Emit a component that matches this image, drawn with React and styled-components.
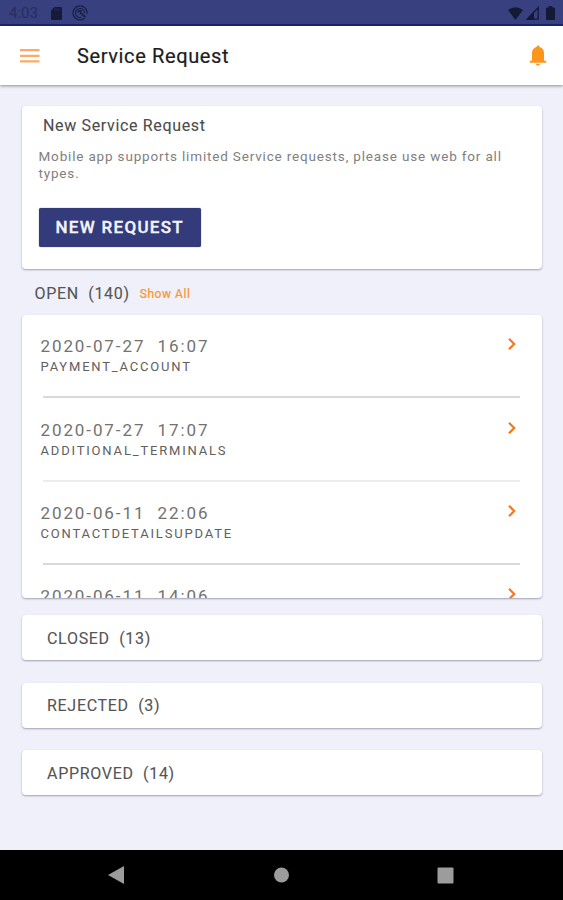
import React from 'react';
import styled, { createGlobalStyle } from 'styled-components';

const GlobalStyle = createGlobalStyle`
  * { box-sizing: border-box; }
  body { margin: 0; background: #eff0f9; font-family: Roboto, "Liberation Sans", sans-serif; }
`;

const Screen = styled.div`
  width: 563px;
  height: 900px;
  display: flex;
  flex-direction: column;
  overflow: hidden;
  background: #eff0f9;
`;

const StatusBar = styled.header`
  height: 26px;
  flex: none;
  display: flex;
  justify-content: space-between;
  padding: 2px 8px 0 9px;
  background: #38407f;
  border-bottom: 2px solid #18256f;
`;

const StatusGroup = styled.div`
  display: flex;
  align-items: center;
  gap: ${(p) => p.$gap}px;
`;

const Clock = styled.span`
  width: 32px;
  font-size: 15px;
  line-height: 22px;
  color: #272d5e;
`;

const AppBar = styled.div`
  height: 59px;
  flex: none;
  display: flex;
  align-items: center;
  padding: 0 16px 0 20px;
  background: #fff;
  box-shadow: 0 1px 3px rgba(40, 42, 60, 0.5);
`;

const MenuButton = styled.button`
  width: 57px;
  height: 14px;
  padding: 0;
  border: 0;
  background: none;
  display: flex;
`;

const Title = styled.h1`
  flex: 1;
  margin: 0;
  font-size: 20px;
  font-weight: 400;
  line-height: 24px;
  letter-spacing: 0.62px;
  color: #1c1c1c;
  -webkit-text-stroke: 0.2px #1c1c1c;
`;

const Content = styled.main`
  flex: 1;
  min-height: 0;
  padding: 21px 21px 0 21.5px;
  display: flex;
  flex-direction: column;
`;

const Card = styled.section`
  flex: none;
  height: ${(p) => p.$height}px;
  margin-bottom: ${(p) => p.$after || 0}px;
  padding: ${(p) => p.$pad || '0'};
  overflow: hidden;
  border-radius: 4px;
  background: #fff;
  box-shadow: 0 1px 2px rgba(50, 50, 75, 0.42);
`;

const CardTitle = styled.h2`
  margin: 0 0 0 4.5px;
  font-size: 16px;
  font-weight: 400;
  line-height: 20px;
  letter-spacing: 0.66px;
  color: #4c4c4c;
  -webkit-text-stroke: 0.1px #4c4c4c;
`;

const Description = styled.p`
  margin: 12px 0 26px;
  width: 475px;
  font-size: 13.5px;
  line-height: 17px;
  letter-spacing: 0.83px;
  color: #808080;
`;

const PrimaryButton = styled.button`
  width: 162.5px;
  height: 39px;
  padding: 0;
  border: 0;
  border-radius: 2px;
  background: #333b7b;
  box-shadow: 0 0 1px #333b7b;
  color: #f3f4fc;
  font: 500 17px/39px Roboto, sans-serif;
  letter-spacing: 1.3px;
  -webkit-text-stroke: 0.35px #f3f4fc;
`;

const SectionHeader = styled.div`
  height: 46px;
  flex: none;
  display: flex;
  align-items: center;
  padding: 3px 0 0 13px;
  gap: 10px;
`;

const SectionLabel = styled.span`
  font-size: 16px;
  line-height: 20px;
  letter-spacing: 0.7px;
  white-space: pre;
  color: #555;
  -webkit-text-stroke: 0.1px #555;
`;

const ShowAll = styled.a`
  font-size: 12px;
  line-height: 16px;
  letter-spacing: 0.55px;
  color: #f9952b;
  -webkit-text-stroke: 0.2px #f9952b;
`;

const RequestRow = styled.div`
  height: 83.4px;
  display: flex;
  justify-content: space-between;
  padding: 21.2px 24px 0 19px;
`;

const RowText = styled.div`
  display: flex;
  flex-direction: column;
`;

const RowDate = styled.span`
  font-size: 17px;
  line-height: 20px;
  letter-spacing: 1.9px;
  white-space: pre;
  color: #727272;
`;

const RowType = styled.span`
  margin-top: 3.3px;
  font-size: 13px;
  line-height: 16px;
  letter-spacing: 1.82px;
  color: #606060;
`;

const Divider = styled.hr`
  height: 2px;
  margin: -2px 22px 0 21px;
  border: 0;
  background: ${(p) => (p.$light ? '#ececec' : '#d9d9d9')};
`;

const NavBar = styled.nav`
  height: 50px;
  flex: none;
  display: grid;
  grid-template-columns: repeat(3, 164.5px);
  justify-content: center;
  align-items: center;
  justify-items: center;
  padding-right: 2px;
  background: #000;
`;

const REQUESTS = [
  { date: '2020-07-27  16:07', type: 'PAYMENT_ACCOUNT' },
  { date: '2020-07-27  17:07', type: 'ADDITIONAL_TERMINALS', light: true },
  { date: '2020-06-11  22:06', type: 'CONTACTDETAILSUPDATE' },
  { date: '2020-06-11  14:06' },
];

const SdCardIcon = () => (
  <svg width="11" height="13" viewBox="0 0 11 13">
    <path d="M3.5 0H10a1 1 0 0 1 1 1v11a1 1 0 0 1-1 1H1a1 1 0 0 1-1-1V3.5z" fill="#151b38" />
    <path d="M4 1.500v2M6 1.500v2M8 1.500v2" stroke="#2b3263" strokeWidth="1" />
  </svg>
);

const SyncIcon = () => (
  <svg width="16" height="16" viewBox="0 0 16 16" fill="none" stroke="#1b2147">
    <path d="M12.600 13.200A7 7 0 1 1 15 8.600" strokeWidth="1.300" />
    <path d="M9.500 12.200A4.500 4.500 0 1 1 12.500 8" strokeWidth="1.100" />
    <path d="M5.800 7.200a2.600 2.600 0 0 1 3.800-1M8 7.600l5.400 4.400" strokeWidth="1.900" />
  </svg>
);

const WifiIcon = () => (
  <svg width="15" height="13" viewBox="0 0 15 13">
    <path d="M0 3Q7.500-2.600 15 3L7.500 13z" fill="#131a35" />
  </svg>
);

const SignalIcon = () => (
  <svg width="13" height="14" viewBox="0 0 13 14">
    <path d="M1.200 13.200L12.200 1.500v11.700z" fill="none" stroke="#131a35" strokeWidth="1.300" />
    <path d="M0 14L8 5.500V14z" fill="#131a35" />
  </svg>
);

const BatteryIcon = () => (
  <svg width="9" height="14" viewBox="0 0 9 14">
    <path d="M2.700 0h3.600v1.400H8a1 1 0 0 1 1 1V13a1 1 0 0 1-1 1H1a1 1 0 0 1-1-1V2.400a1 1 0 0 1 1-1h1.700z" fill="#131a35" />
  </svg>
);

const MenuIcon = () => (
  <svg width="20" height="14" viewBox="0 0 20 14">
    <path d="M0 1.200h19.500M0 6.800h19.500M0 12.400h19.500" stroke="#fbab67" strokeWidth="2.300" />
  </svg>
);

const BellIcon = () => (
  <svg width="18" height="21" viewBox="0 0 18 21" fill="#fb951b">
    <path d="M9 0l1.700 2C13.600 3 15 5 15 8v7.800h2.200v1.900H.8v-1.900H3V8c0-3 1.400-5 4.300-6z" />
    <path d="M7 18.700h4a2 1.900 0 0 1-4 0z" />
  </svg>
);

const ChevronIcon = () => (
  <svg width="12" height="16" viewBox="0 0 12 16">
    <path d="M3 2.700l5.200 5.300L3 13.300" fill="none" stroke="#f5781e" strokeWidth="2.200" />
  </svg>
);

export default function App() {
  return (
    <Screen>
      <GlobalStyle />
      <StatusBar>
        <StatusGroup $gap={10}>
          <Clock>4:03</Clock>
          <SdCardIcon />
          <SyncIcon />
        </StatusGroup>
        <StatusGroup $gap={3.5}>
          <WifiIcon />
          <SignalIcon />
          <span />
          <BatteryIcon />
        </StatusGroup>
      </StatusBar>
      <AppBar>
        <MenuButton aria-label="Menu"><MenuIcon /></MenuButton>
        <Title>Service Request</Title>
        <BellIcon />
      </AppBar>
      <Content>
        <Card $height={163} $pad="10px 16px 0 17px">
          <CardTitle>New Service Request</CardTitle>
          <Description>
            Mobile app supports limited Service requests, please use web for all types.
          </Description>
          <PrimaryButton>NEW REQUEST</PrimaryButton>
        </Card>
        <SectionHeader>
          <SectionLabel>{'OPEN  (140)'}</SectionLabel>
          <ShowAll>Show All</ShowAll>
        </SectionHeader>
        <Card $height={283} $after={17}>
          {REQUESTS.map((r) => (
            <React.Fragment key={r.date}>
              <RequestRow>
                <RowText>
                  <RowDate>{r.date}</RowDate>
                  {r.type && <RowType>{r.type}</RowType>}
                </RowText>
                <ChevronIcon />
              </RequestRow>
              <Divider $light={r.light} />
            </React.Fragment>
          ))}
        </Card>
        <Card $height={45} $after={22.5} $pad="13.5px 25.5px">
          <SectionLabel>{'CLOSED  (13)'}</SectionLabel>
        </Card>
        <Card $height={45} $after={22.5} $pad="13.5px 25.5px">
          <SectionLabel>{'REJECTED  (3)'}</SectionLabel>
        </Card>
        <Card $height={45} $pad="13.5px 25.5px">
          <SectionLabel>{'APPROVED  (14)'}</SectionLabel>
        </Card>
      </Content>
      <NavBar>
        <svg width="16" height="18" viewBox="0 0 16 18"><path d="M0 9L16 0v18z" fill="#9c9c9c" /></svg>
        <svg width="16" height="16" viewBox="0 0 16 16"><circle cx="8.500" cy="8" r="7.500" fill="#9c9c9c" /></svg>
        <svg width="17" height="17" viewBox="0 0 17 17"><rect x=".5" y=".5" width="16" height="16" rx="1" fill="#9c9c9c" /></svg>
      </NavBar>
    </Screen>
  );
}
